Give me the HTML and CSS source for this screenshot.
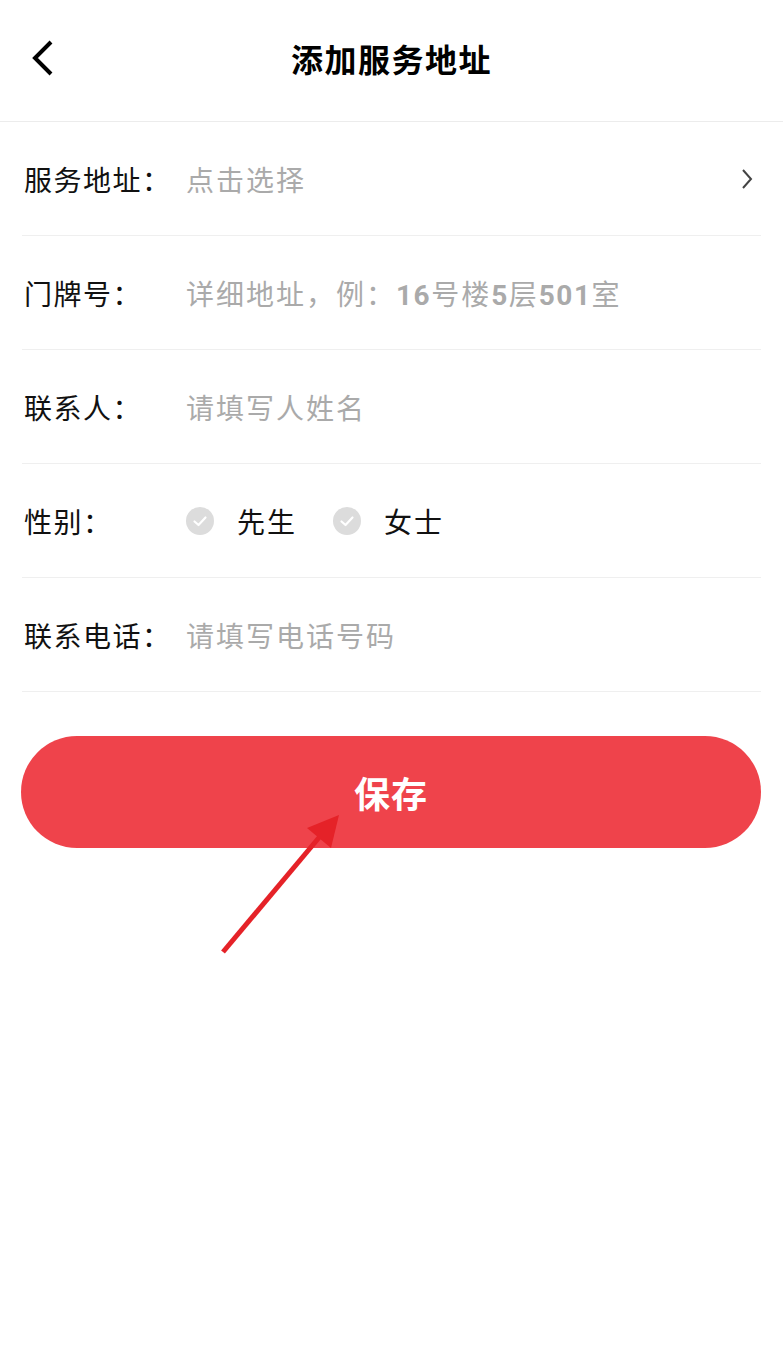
FILE: index.html
```html
<!DOCTYPE html>
<html lang="zh-CN">
<head>
<meta charset="utf-8">
<title>添加服务地址</title>
<link rel="stylesheet" href="styles.css">
</head>
<body>
<div class="page">
  <header class="topbar">
    <svg class="back" width="30" height="40" viewBox="0 0 30 40"><path d="M22 4 L6 20 L22 36" fill="none" stroke="#000" stroke-width="4"/></svg>
    <h1 class="title">添加服务地址</h1>
  </header>
  <div class="form">
    <div class="row">
      <span class="label">服务地址：</span>
      <span class="ph grow">点击选择</span>
      <svg class="more" width="14" height="24" viewBox="0 0 14 24"><path d="M3 3 L11 12 L3 21" fill="none" stroke="#444" stroke-width="2"/></svg>
    </div>
    <div class="row">
      <span class="label">门牌号：</span>
      <span class="ph">详细地址，例：<b>16</b>号楼<b>5</b>层<b>501</b>室</span>
    </div>
    <div class="row">
      <span class="label">联系人：</span>
      <span class="ph">请填写人姓名</span>
    </div>
    <div class="row">
      <span class="label">性别：</span>
      <span class="opt">
        <svg class="chk" width="28" height="28" viewBox="0 0 28 28"><circle cx="14" cy="14" r="14" fill="#dcdcdc"/><path d="M8.5 14.5 L12.5 18 L19.5 10.5" fill="none" stroke="#fff" stroke-width="2.2" stroke-linecap="round" stroke-linejoin="round"/></svg>
        <span class="opttext">先生</span>
      </span>
      <span class="opt">
        <svg class="chk" width="28" height="28" viewBox="0 0 28 28"><circle cx="14" cy="14" r="14" fill="#dcdcdc"/><path d="M8.5 14.5 L12.5 18 L19.5 10.5" fill="none" stroke="#fff" stroke-width="2.2" stroke-linecap="round" stroke-linejoin="round"/></svg>
        <span class="opttext">女士</span>
      </span>
    </div>
    <div class="row">
      <span class="label">联系电话：</span>
      <span class="ph">请填写电话号码</span>
    </div>
    <button class="save">保存</button>
  </div>
  <svg class="arrow" width="783" height="1345" viewBox="0 0 783 1345">
    <line x1="223" y1="952" x2="322" y2="834" stroke="#e52228" stroke-width="5"/>
    <polygon points="339,815 307,828 331,848" fill="#e52228"/>
  </svg>
</div>
</body>
</html>
```
FILE: styles.css
```css
html, body {
  margin: 0;
  padding: 0;
  background: #fff;
}
body {
  font-family: "Noto Sans CJK SC", "Noto Sans", sans-serif;
  color: #111;
}
.page {
  position: relative;
  width: 783px;
  height: 1345px;
  overflow: hidden;
}
.topbar {
  height: 122px;
  box-sizing: border-box;
  padding-bottom: 6px;
  border-bottom: 1px solid #ececec;
  display: flex;
  align-items: center;
  justify-content: center;
  position: relative;
}
.back {
  position: absolute;
  left: 29px;
  top: 38px;
}
.title {
  margin: 0;
  font-size: 32px;
  font-weight: 700;
  letter-spacing: 1.5px;
  color: #000;
}
.form {
  padding: 0 22px;
}
.row {
  height: 113px;
  border-bottom: 1px solid #efefef;
  display: flex;
  align-items: center;
  font-size: 28px;
}
.label {
  width: 162px;
  flex-shrink: 0;
  padding-left: 2px;
  color: #111;
  letter-spacing: 1.5px;
}
.ph {
  color: #aaa;
  font-size: 28px;
  letter-spacing: 2px;
}
.ph b {
  font-family: Roboto, "Noto Sans", sans-serif;
  font-weight: 700;
  letter-spacing: 1.5px;
}
.grow {
  flex: 1;
}
.more {
  margin-right: 7px;
}
.opt {
  display: flex;
  align-items: center;
  margin-right: 36px;
}
.chk {
  margin-right: 23px;
}
.opttext {
  font-size: 28px;
  letter-spacing: 2px;
  color: #111;
}
.save {
  display: block;
  width: 740px;
  height: 112px;
  margin: 44px 0 0 -1px;
  border: none;
  border-radius: 56px;
  background: #ef434b;
  color: #fff;
  font-family: "Noto Sans CJK SC", sans-serif;
  font-size: 36px;
  font-weight: 700;
  letter-spacing: 1px;
}
.arrow {
  position: absolute;
  left: 0;
  top: 0;
  pointer-events: none;
}
```
